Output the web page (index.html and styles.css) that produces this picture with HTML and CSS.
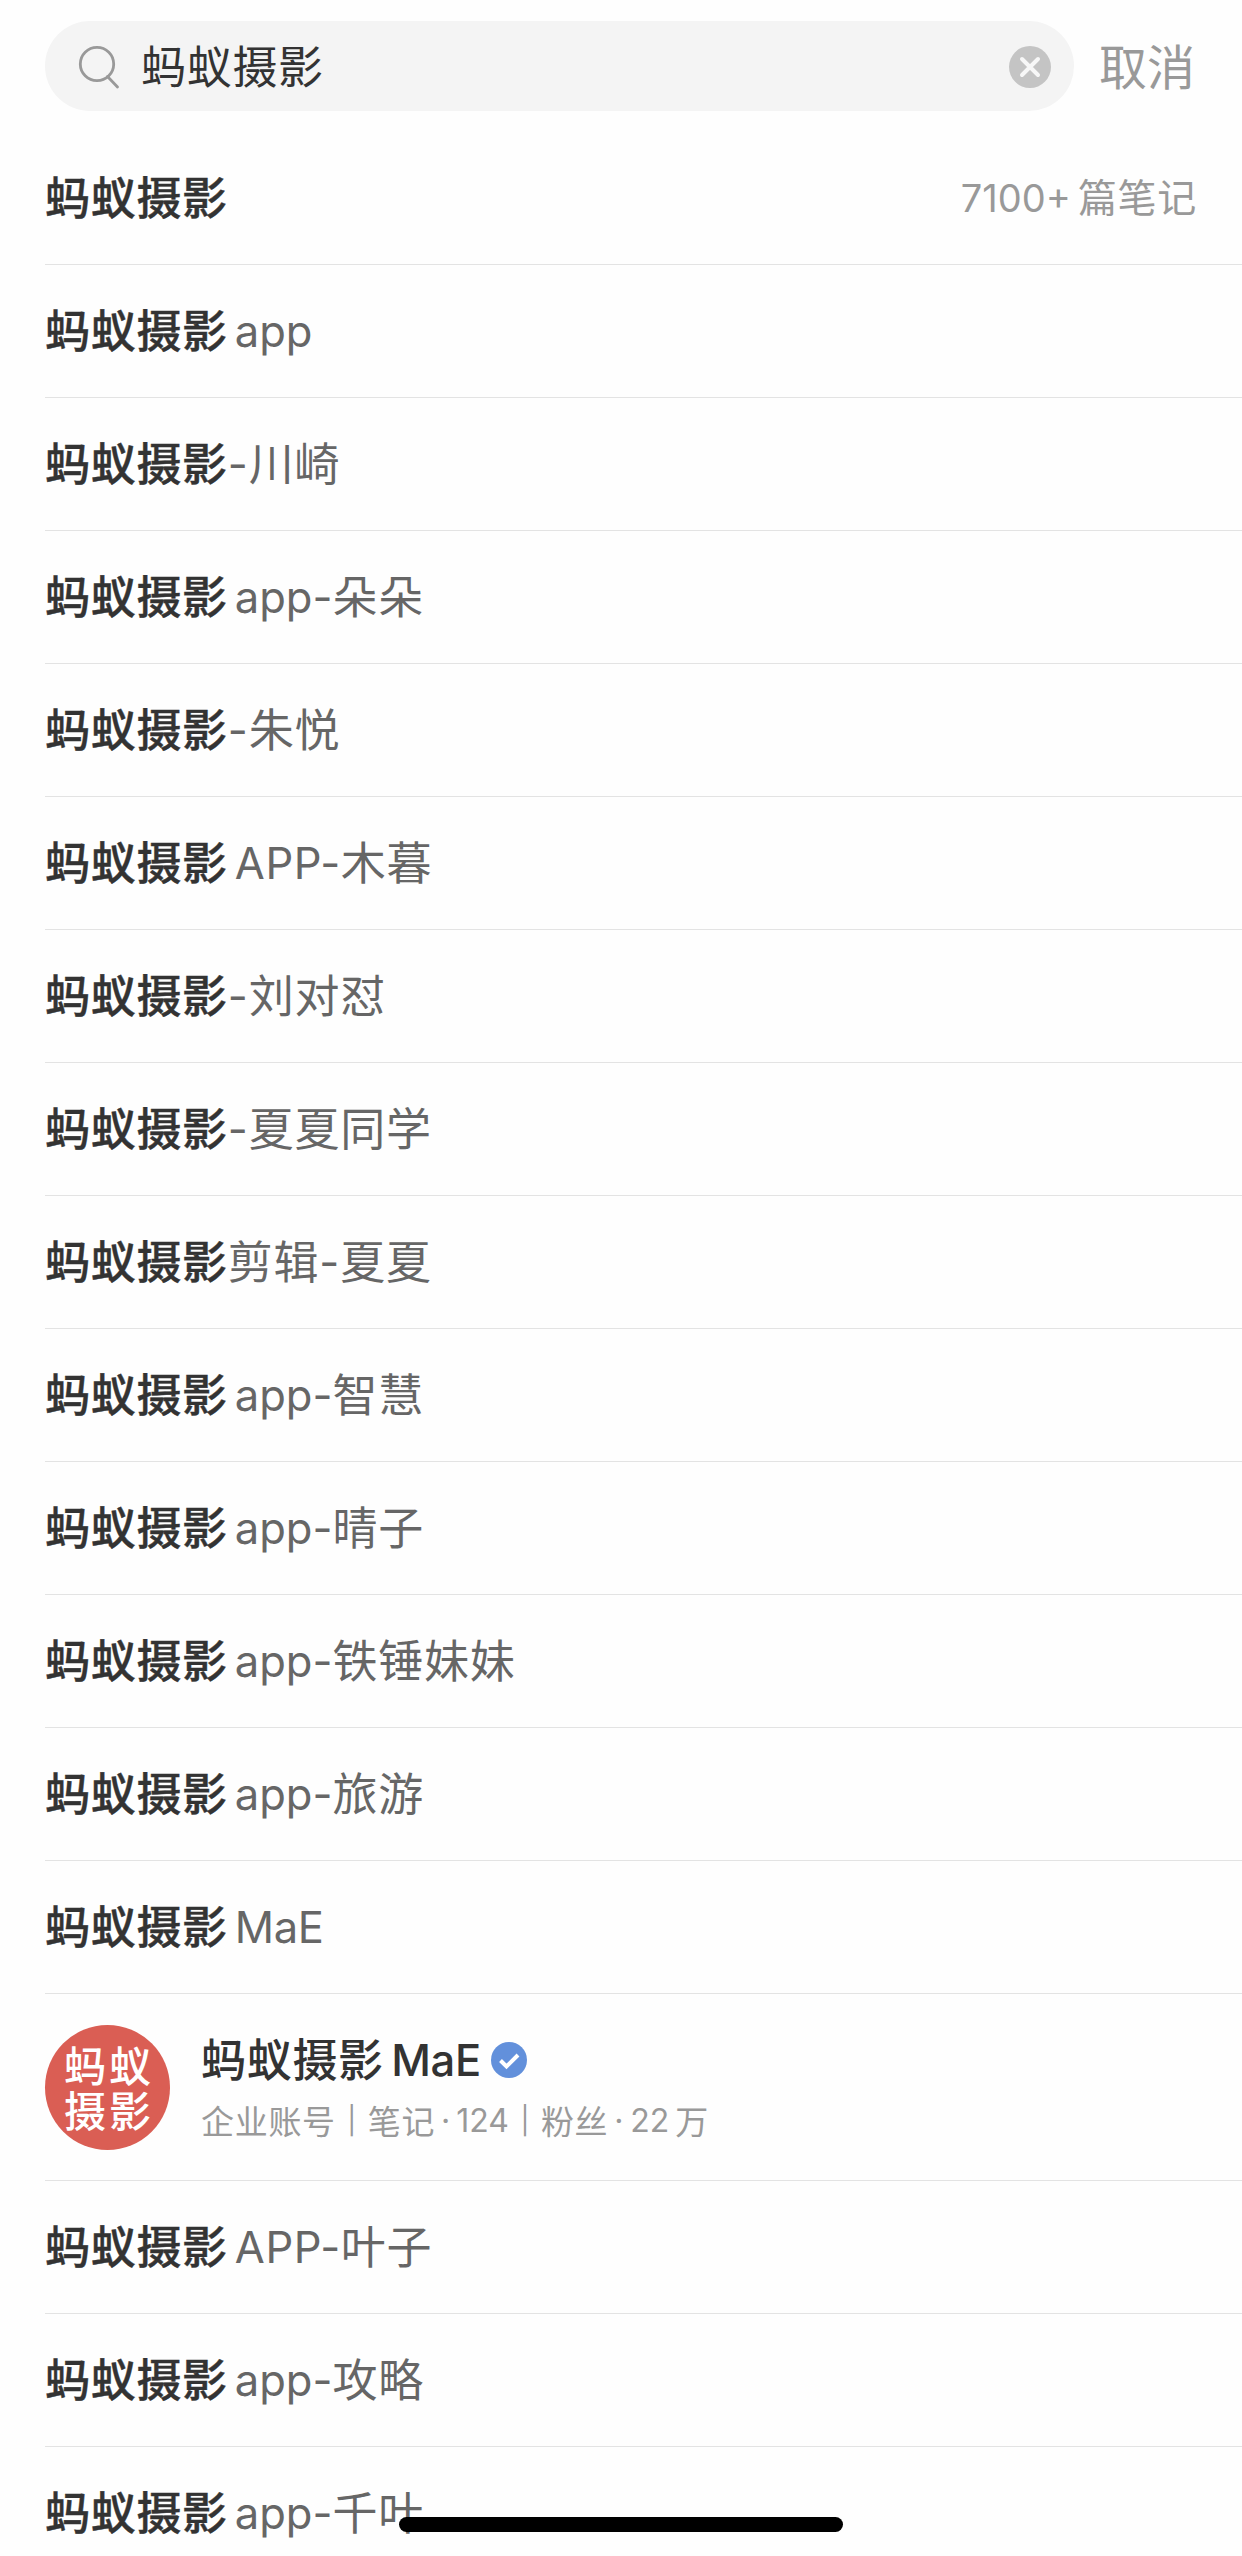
FILE: index.html
```html
<!DOCTYPE html>
<html lang="zh-CN">
<head>
<meta charset="utf-8">
<title>蚂蚁摄影</title>
<link rel="stylesheet" href="styles.css">
</head>
<body>
<header class="top">
  <div class="search">
    <svg class="search-icon" width="42" height="46" viewBox="0 0 42 46" fill="none" stroke="#999" stroke-width="2.8"><circle cx="19" cy="19" r="16.7"/><path d="M29.5 31.5L39.5 42" stroke-linecap="round"/></svg>
    <span class="query">蚂蚁摄影</span>
    <svg class="clear" width="42" height="42" viewBox="0 0 42 42"><circle cx="21" cy="21" r="21" fill="#c4c4c4"/><path d="M13 13L29 29M29 13L13 29" stroke="#f7f7f7" stroke-width="4" stroke-linecap="round"/></svg>
  </div>
  <span class="cancel">取消</span>
</header>
<main class="list">
  <div class="row"><b>蚂蚁摄影</b><span class="count"><i>7100+</i>篇笔记</span></div>
  <div class="row"><b>蚂蚁摄影</b><i class="gap">app</i></div>
  <div class="row"><b>蚂蚁摄影</b><i class="dash">-</i>川崎</div>
  <div class="row"><b>蚂蚁摄影</b><i class="gap">app-</i>朵朵</div>
  <div class="row"><b>蚂蚁摄影</b><i class="dash">-</i>朱悦</div>
  <div class="row"><b>蚂蚁摄影</b><i class="gap caps">APP-</i>木暮</div>
  <div class="row"><b>蚂蚁摄影</b><i class="dash">-</i>刘对怼</div>
  <div class="row"><b>蚂蚁摄影</b><i class="dash">-</i>夏夏同学</div>
  <div class="row"><b>蚂蚁摄影</b>剪辑<i class="dash">-</i>夏夏</div>
  <div class="row"><b>蚂蚁摄影</b><i class="gap">app-</i>智慧</div>
  <div class="row"><b>蚂蚁摄影</b><i class="gap">app-</i>晴子</div>
  <div class="row"><b>蚂蚁摄影</b><i class="gap">app-</i>铁锤妹妹</div>
  <div class="row"><b>蚂蚁摄影</b><i class="gap">app-</i>旅游</div>
  <div class="row"><b>蚂蚁摄影</b><i class="gap mixed">MaE</i></div>
  <div class="row account">
    <div class="avatar"><span>蚂蚁</span><span>摄影</span></div>
    <div class="info">
      <div class="name"><b>蚂蚁摄影</b><i class="gap mixed">MaE</i><svg class="badge" width="36" height="36" viewBox="0 0 36 36"><circle cx="18" cy="18" r="18" fill="#6290db"/><path d="M9.5 18.5L15.5 24.5L27 13" fill="none" stroke="#fff" stroke-width="4"/></svg></div>
      <div class="meta"><span>企业账号</span><i class="bar">|</i><span>笔记</span><i class="dot">·</i><i>124</i><i class="bar">|</i><span>粉丝</span><i class="dot">·</i><i class="fans">22</i><span>万</span></div>
    </div>
  </div>
  <div class="row"><b>蚂蚁摄影</b><i class="gap caps">APP-</i>叶子</div>
  <div class="row"><b>蚂蚁摄影</b><i class="gap">app-</i>攻略</div>
  <div class="row"><b>蚂蚁摄影</b><i class="gap">app-</i>千叶</div>
</main>
<div class="home-indicator"></div>
</body>
</html>
```
FILE: styles.css
```css
* { box-sizing: border-box; }
html, body { margin: 0; height: 2556px; overflow: hidden; }
body {
  position: relative;
  background: #fefefe;
  color: #666;
  font-family: "Noto Sans CJK SC", sans-serif;
  font-size: 45px;
  letter-spacing: 0.7px;
}
i {
  font-family: Inter, "Noto Sans CJK SC", sans-serif;
  font-style: normal;
  font-size: 43.5px;
  letter-spacing: 0;
}
b { font-weight: 500; color: #333; }
.row > b { -webkit-text-stroke: 0.4px #333; }
.row > i { padding-top: 4px; }
.gap { margin-left: 7px; }
.dash { margin-right: 1px; }
.caps { letter-spacing: 0.6px; }
.mixed { letter-spacing: -0.4px; }
.top {
  display: flex;
  align-items: center;
  height: 132px;
  padding-left: 45px;
}
.search {
  display: flex;
  flex: none;
  align-items: center;
  width: 1029px;
  height: 90px;
  padding: 0 23px 0 33px;
  border-radius: 45px;
  background: #f4f4f4;
}
.search-icon { margin-top: 3px; }
.query { margin-left: 21px; padding-bottom: 3px; color: #333; line-height: 87px; }
.clear { margin: 2px 0 0 auto; }
.cancel { margin-left: 25px; padding-bottom: 5px; color: #999; font-size: 48px; letter-spacing: 0; white-space: nowrap; }
.list { padding-left: 45px; }
.row {
  display: flex;
  align-items: center;
  height: 133px;
  padding-bottom: 4px;
  border-bottom: 1px solid #e3e3e3;
  line-height: 66px;
  white-space: nowrap;
}
.count { margin-left: auto; padding-right: 45px; color: #999; font-size: 39px; }
.count i { font-size: 38px; margin-right: 7px; }
.account { height: 187px; padding-bottom: 0; }
.avatar {
  display: flex;
  flex-direction: column;
  align-items: center;
  justify-content: center;
  width: 125px;
  height: 125px;
  padding: 0 0 2px 3px;
  border-radius: 50%;
  background: #da5e54;
  color: #fff;
  font-size: 42px;
  font-weight: 500;
  letter-spacing: 3px;
  line-height: 45px;
}
.info { margin-left: 31px; }
.name { display: flex; align-items: center; height: 66px; }
.name b { padding-bottom: 4px; }
.name i { margin-left: 7.5px; color: #333; font-weight: 500; }
.badge { margin-left: 10px; }
.meta {
  display: flex;
  align-items: center;
  height: 54px;
  color: #999;
  font-size: 33px;
}
.meta i { font-size: 32px; padding-top: 2px; }
.meta .bar { width: 32px; font-size: 27px; text-align: center; }
.dot { width: 21px; text-align: center; }
.fans { margin: 0 6px 0 1px; }
.home-indicator {
  position: absolute;
  left: 399px;
  top: 2517px;
  width: 444px;
  height: 15px;
  border-radius: 8px;
  background: #000;
}
```
